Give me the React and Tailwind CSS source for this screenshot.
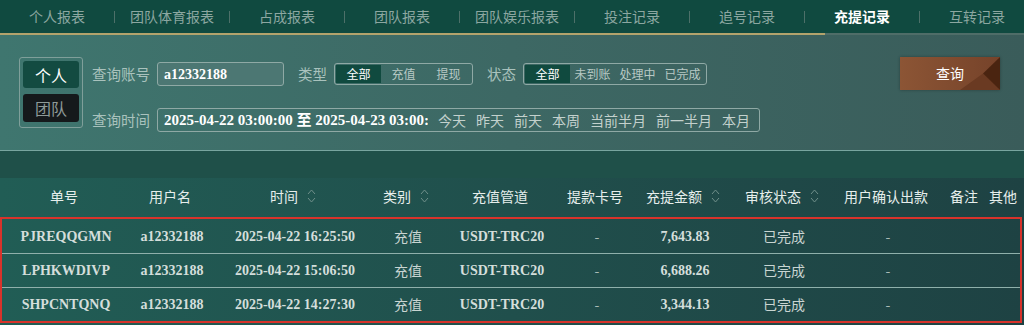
import React from 'react';

const tabs = ['个人报表', '团队体育报表', '占成报表', '团队报表', '团队娱乐报表', '投注记录', '追号记录', '充提记录', '互转记录'];

const cols = 'grid grid-cols-[128px_84px_162px_64px_124px_66px_110px_88px_120px_36px_42px]';

const rows = [
  { no: 'PJREQQGMN', user: 'a12332188', time: '2025-04-22 16:25:50', amount: '7,643.83' },
  { no: 'LPHKWDIVP', user: 'a12332188', time: '2025-04-22 15:06:50', amount: '6,688.26' },
  { no: 'SHPCNTQNQ', user: 'a12332188', time: '2025-04-22 14:27:30', amount: '3,344.13' },
];

const serif = "font-['Liberation_Serif','Noto_Sans_CJK_SC',serif] font-bold";

function SortIcon() {
  return (
    <svg width="9" height="16" viewBox="0 0 9 16" className="ml-[9px] shrink-0">
      <path d="M1 6 L4.5 2 L8 6" fill="none" stroke="#6f8f8a" strokeWidth="1" />
      <path d="M1 10 L4.5 14 L8 10" fill="none" stroke="#6f8f8a" strokeWidth="1" />
    </svg>
  );
}

function Seg({ items }) {
  return (
    <div className="flex h-[22px] border border-[#8fa9a5] rounded-[3px] overflow-hidden p-px">
      {items.map((t, i) => (
        <div
          key={t}
          className={`w-[45px] flex items-center justify-center text-[12px] whitespace-nowrap ${i === 0 ? 'bg-[#104a3f] text-white' : 'text-[#b8c9c5]'}`}
        >
          {t}
        </div>
      ))}
    </div>
  );
}

const label = 'text-[14.5px] text-[#a9c2bd] whitespace-nowrap shrink-0';

export default function App() {
  return (
    <div className="w-[1024px] h-[325px] overflow-hidden font-['Noto_Sans_CJK_SC',sans-serif] bg-[#1f5049]">
      {/* tabs */}
      <div className="h-[33px] bg-[#104a40] flex items-center overflow-hidden">
        {tabs.map((t, i) => (
          <React.Fragment key={t}>
            <div className={`w-[114px] shrink-0 text-center text-[14px] ${t === '充提记录' ? 'text-white font-bold' : 'text-[#8ca7a1]'}`}>{t}</div>
            {i < tabs.length - 1 && <div className="w-px h-[12px] bg-[#4d7069] shrink-0" />}
          </React.Fragment>
        ))}
      </div>
      <div className="flex h-[2px]">
        <div className="w-[825px] bg-[#b3a36c]" />
        <div className="flex-1 bg-[#4f6d68]" />
      </div>

      {/* filters */}
      <div className="h-[115px] bg-gradient-to-r from-[#3f766f] via-[#3d6864] to-[#3a5c5a] flex pl-[19px] pt-[22px]">
        <div className="w-[64px] h-[71px] border border-[#7f9f9a] rounded-[3px] p-[3px] flex flex-col gap-[6px] shrink-0">
          <div className="h-[27px] bg-[#134b41] rounded-[3px] flex items-center justify-center text-white text-[16px]">个人</div>
          <div className="h-[28px] bg-[#15191b] rounded-[3px] flex items-center justify-center text-[#8e9a98] text-[16px]">团队</div>
        </div>
        <div className="ml-[9px] flex flex-col">
          <div className="flex items-center h-[24px] mt-[5px]">
            <span className={`${label} w-[58px]`}>查询账号</span>
            <div className={`ml-[7px] w-[127px] h-[24px] border border-[#8fa9a5] rounded-[3px] bg-[#4c7773] flex items-center pl-[6px] text-white text-[14px] ${serif}`}>a12332188</div>
            <span className={`ml-[14px] ${label}`}>类型</span>
            <div className="ml-[7px]"><Seg items={['全部', '充值', '提现']} /></div>
            <span className={`ml-[14px] ${label}`}>状态</span>
            <div className="ml-[7px]"><Seg items={['全部', '未到账', '处理中', '已完成']} /></div>
          </div>
          <div className="flex items-center h-[24px] mt-[22px]">
            <span className={`${label} w-[58px]`}>查询时间</span>
            <div className="ml-[7px] w-[603px] h-[24px] border border-[#8fa9a5] rounded-[3px] flex items-center">
              <div className={`w-[270px] shrink-0 pl-[6px] overflow-hidden whitespace-nowrap text-white text-[15px] ${serif}`}>2025-04-22 03:00:00 至 2025-04-23 03:00:00</div>
              <div className="flex gap-[10px] ml-[10px] text-[14px] text-[#c3d1cd] whitespace-nowrap">
                {['今天', '昨天', '前天', '本周', '当前半月', '前一半月', '本月'].map(t => <span key={t}>{t}</span>)}
              </div>
            </div>
          </div>
        </div>
        <div className="ml-auto mr-[24px] relative w-[100px] h-[33px] bg-gradient-to-r from-[#8c5535] to-[#76432a] flex items-center justify-center text-white text-[14px] overflow-hidden shadow-[0_0_3px_rgba(0,0,0,0.3)] shrink-0">
          <svg width="100" height="33" viewBox="0 0 100 33" className="absolute inset-0">
            <polygon points="60,33 83,16.5 100,33" fill="#6a3a22" />
            <polygon points="83,16.5 100,0 100,33" fill="#4a2410" />
          </svg>
          <span className="relative">查询</span>
        </div>
      </div>
      <div className="h-px bg-[#78a59f]" />

      {/* table */}
      <div className="h-[175px] bg-gradient-to-r from-[#215d55] via-[#204f4c] to-[#1e4243]">
        <div className={`${cols} h-[36px] mt-[27px] items-center text-[14px] text-[#e6eeec]`}>
          <div className="text-center">单号</div>
          <div className="text-center">用户名</div>
          <div className="flex items-center justify-center">时间<SortIcon /></div>
          <div className="flex items-center justify-center">类别<SortIcon /></div>
          <div className="text-center">充值管道</div>
          <div className="text-center">提款卡号</div>
          <div className="flex items-center justify-center">充提金额<SortIcon /></div>
          <div className="flex items-center justify-center">审核状态<SortIcon /></div>
          <div className="text-center">用户确认出款</div>
          <div className="text-center">备注</div>
          <div className="text-center">其他</div>
        </div>
        <div className="mt-[3px] mr-[2px] border-2 border-[#d8332b]">
          {rows.map((r, i) => (
            <div key={r.no} className={`${cols} h-[34px] items-center ${i > 0 ? 'border-t border-[#8fb0ab]' : ''} text-[14px]`}>
              <div className={`text-center text-[#d4dedb] ${serif}`}>{r.no}</div>
              <div className={`text-center text-[#d4dedb] ${serif}`}>{r.user}</div>
              <div className={`text-center text-[#d4dedb] ${serif}`}>{r.time}</div>
              <div className="text-center text-[#c9d5d2]">充值</div>
              <div className={`text-center text-[#d4dedb] ${serif}`}>USDT-TRC20</div>
              <div className="text-center text-[#a9bbb7]">-</div>
              <div className={`text-center text-[#d4dedb] ${serif}`}>{r.amount}</div>
              <div className="text-center text-[#c9d5d2]">已完成</div>
              <div className="text-center text-[#a9bbb7]">-</div>
              <div />
              <div />
            </div>
          ))}
        </div>
      </div>
    </div>
  );
}
